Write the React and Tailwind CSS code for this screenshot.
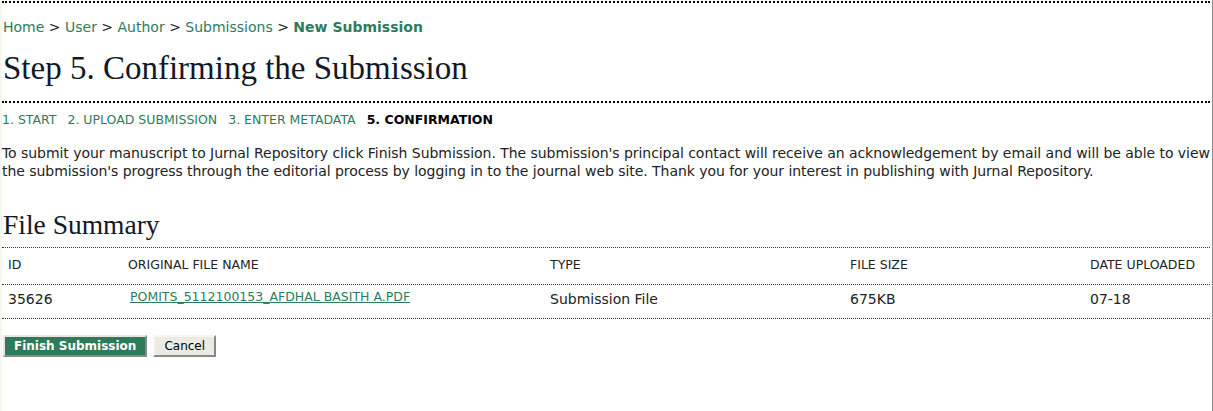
const crumbs = ["Home", "User", "Author", "Submissions"]
const steps = ["1. START", "2. UPLOAD SUBMISSION", "3. ENTER METADATA"]

const App = () => {
    return (
        <div className="min-h-[411px] w-[1213px] bg-white border-l-2 border-l-[#f7f6ec] border-r border-r-[#8a8a8a] font-['DejaVu_Sans',Verdana,sans-serif] text-[14px] text-[#222]">
            <div className="pt-[1px] pr-[2px]">
                <div className="border-t-2 border-dotted border-black"></div>

                {/* breadcrumb */}
                <div className="mt-[15px] pl-[1px] leading-[18px] text-[#2e7b5c]">
                    {crumbs.map((c) => (
                        <span key={c}>
                            <a href="#">{c}</a>
                            <span className="text-[#222]"> &gt; </span>
                        </span>
                    ))}
                    <a href="#" className="font-bold">New Submission</a>
                </div>

                <h1 className="mt-[12px] pl-[1px] font-['Liberation_Serif',Georgia,serif] text-[33px] leading-[40px] text-[#111827]">
                    Step 5. Confirming the Submission
                </h1>

                <div className="mt-[13px] border-t-2 border-dotted border-black"></div>

                {/* steps */}
                <div className="mt-[9px] flex gap-[11px] text-[12.5px] leading-[16px]">
                    {steps.map((s) => (
                        <a key={s} href="#" className="text-[#2e7b5c]">{s}</a>
                    ))}
                    <span className="font-bold text-black">5. CONFIRMATION</span>
                </div>

                <p className="mt-[16px] -mr-[2px] leading-[18px] tracking-[-0.05px]">
                    To submit your manuscript to Jurnal Repository click Finish Submission. The submission's principal contact will receive an acknowledgement by email and will be able to view the submission's progress through the editorial process by logging in to the journal web site. Thank you for your interest in publishing with Jurnal Repository.
                </p>

                <h2 className="mt-[29px] pl-[1px] font-['Liberation_Serif',Georgia,serif] text-[27.5px] leading-[32px] text-[#111827]">
                    File Summary
                </h2>

                {/* table */}
                <div className="mt-[6px] border-t border-dotted border-[#333]">
                    <div className="grid grid-cols-[120px_422px_300px_240px_1fr] h-[36px] pt-[9px] pl-[6px] text-[12.5px] leading-[16px] uppercase">
                        <span>ID</span>
                        <span>Original File Name</span>
                        <span>Type</span>
                        <span>File Size</span>
                        <span>Date Uploaded</span>
                    </div>
                    <div className="grid grid-cols-[120px_422px_300px_240px_1fr] h-[34px] pt-[5px] pl-[6px] leading-[18px] border-t border-dotted border-[#333]">
                        <span>35626</span>
                        <a href="#" className="pl-[2px] -mt-[2px] text-[12.5px] text-[#2e7b5c] underline">POMITS_5112100153_AFDHAL BASITH A.PDF</a>
                        <span>Submission File</span>
                        <span>675KB</span>
                        <span>07-18</span>
                    </div>
                    <div className="border-t border-dotted border-[#333]"></div>
                </div>

                <div className="mt-[16px] flex gap-[6px] pl-[1px]">
                    <button type="button" className="h-[22px] px-[9px] bg-[#2f7a58] text-[12px] text-white font-bold border-2 border-t-[#e6e6e6] border-l-[#e6e6e6] border-r-[#888] border-b-[#888] leading-none">
                        Finish Submission
                    </button>
                    <button type="button" className="h-[22px] px-[9px] bg-[#ecebe3] text-[12px] text-black border-2 border-t-[#f5f5f5] border-l-[#f5f5f5] border-r-[#888] border-b-[#888] leading-none">
                        Cancel
                    </button>
                </div>
            </div>
        </div>
    )
}

export default App
